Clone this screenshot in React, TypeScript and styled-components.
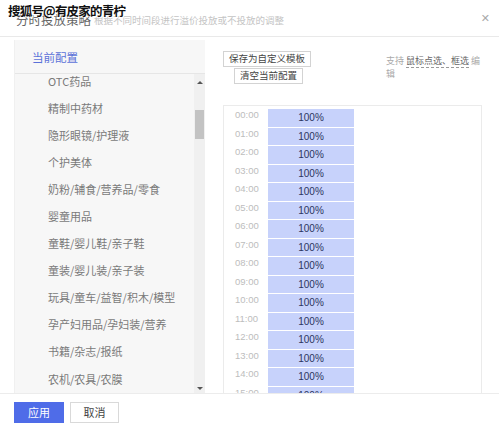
import React from 'react';
import styled, {createGlobalStyle} from 'styled-components';

const GlobalStyle = createGlobalStyle`
    html, body {
        margin: 0;
        padding: 0;
        background: #fff;
    }
    body {
        font-family: "Noto Sans CJK SC", "Noto Sans", sans-serif;
    }
`;

/* Modal frame */
const Modal = styled.div`
    position: relative;
    width: 499px;
    height: 430px;
    display: flex;
    flex-direction: column;
    background: #fff;
    overflow: hidden;
`;

const Header = styled.div`
    height: 36px;
    flex: none;
    display: flex;
    align-items: center;
    padding: 0 9px 0 16px;
    border-bottom: 1px solid #e9e9e9;
`;

const Title = styled.span`
    font-size: 12.5px;
    line-height: 16px;
    color: #666;
    margin-top: 3px;
`;

const SubTitle = styled.span`
    font-size: 9.5px;
    line-height: 12px;
    color: #c4c4c4;
    margin: 4px 0 0 3px;
    flex: 1;
`;

const CloseButton = styled.span`
    font-family: "DejaVu Sans", sans-serif;
    font-size: 11px;
    color: #aaa;
    cursor: pointer;
`;

/* Watermark laid over the title */
const Watermark = styled.div`
    position: absolute;
    top: 2px;
    left: 8px;
    font-size: 12.5px;
    font-weight: bold;
    line-height: 18px;
    letter-spacing: -0.8px;
    color: #111;
    text-shadow: 0 0 1px #fff, 0 0 2px #fff, 1px 1px 0 #fff;
    pointer-events: none;
`;

const Body = styled.div`
    flex: 1;
    min-height: 0;
    display: flex;
    padding: 3px 14px 0 14px;
    overflow: hidden;
`;

/* Left category panel */
const SidePanel = styled.div`
    width: 191px;
    flex: none;
    display: flex;
    flex-direction: column;
    background: #f7f7f7;
    border-left: 1px solid #f0f0f0;
    box-sizing: border-box;
`;

const SideHeader = styled.div`
    height: 33px;
    flex: none;
    display: flex;
    align-items: center;
    padding-left: 17px;
    font-size: 11.5px;
    color: #5b72d9;
    border-bottom: 1px solid #e6e6e6;
`;

const SideScroll = styled.div`
    flex: 1;
    min-height: 0;
    display: flex;
`;

const CategoryList = styled.div`
    flex: 1;
    overflow: hidden;
`;

const CategoryInner = styled.div`
    margin-top: -7px;
`;

const CategoryItem = styled.div`
    height: 27.1px;
    display: flex;
    align-items: center;
    padding-left: 33px;
    font-size: 11px;
    color: #7a7a7a;
    white-space: nowrap;
`;

const ScrollTrack = styled.div`
    width: 11px;
    flex: none;
    display: flex;
    flex-direction: column;
    align-items: center;
    background: #f0f0f0;
`;

const ScrollArrow = styled.div<{ $down?: boolean }>`
    width: 0;
    height: 0;
    border-left: 3px solid transparent;
    border-right: 3px solid transparent;
    ${({$down}) => $down
        ? 'border-top: 3px solid #555; margin-top: auto; margin-bottom: 3px;'
        : 'border-bottom: 3px solid #555; margin-top: 7px;'}
`;

const ScrollThumb = styled.div`
    width: 9px;
    height: 29px;
    margin-top: 26px;
    background: #c3c3c3;
`;

/* Right time settings */
const Main = styled.div`
    flex: 1;
    display: flex;
    flex-direction: column;
    padding-left: 18px;
`;

const Toolbar = styled.div`
    display: flex;
    justify-content: space-between;
    align-items: flex-start;
    padding-top: 11px;
    height: 54px;
    flex: none;
`;

const ButtonStack = styled.div`
    display: flex;
    flex-direction: column;
    align-items: flex-start;
`;

const GhostButton = styled.button<{ $indent?: number }>`
    height: 16px;
    padding: 0 5px;
    margin-left: ${({$indent}) => $indent || 0}px;
    margin-bottom: 1px;
    display: inline-flex;
    align-items: center;
    justify-content: center;
    font-family: inherit;
    font-size: 9.5px;
    line-height: 1;
    color: #444;
    background: #fff;
    border: 1px solid #d3d3d3;
    cursor: pointer;
`;

const Hint = styled.div`
    width: 99px;
    margin-top: 3px;
    font-size: 9px;
    line-height: 13px;
    color: #aaa;
    word-break: break-all;
`;

const HintLink = styled.span`
    color: #666;
    border-bottom: 1px dashed #999;
`;

const ChartBox = styled.div`
    flex: 1;
    margin-right: 3px;
    padding: 3px 12px 0 11px;
    border: 1px solid #ebebeb;
    border-bottom: none;
    overflow: hidden;
`;

const HourRow = styled.div`
    display: flex;
    align-items: flex-start;
    height: 17.5px;
    margin-bottom: 1px;
`;

const HourLabel = styled.span`
    width: 33px;
    flex: none;
    font-family: "Liberation Sans", Arial, sans-serif;
    font-size: 9.5px;
    line-height: 11px;
    color: #bdbdbd;
`;

const HourBar = styled.div`
    width: 86px;
    height: 100%;
    display: flex;
    align-items: center;
    justify-content: center;
    padding-top: 1px;
    box-sizing: border-box;
    background: #c7d2fb;
    font-family: "Liberation Sans", Arial, sans-serif;
    font-size: 10px;
    line-height: 1;
    color: #2c3560;
`;

/* Footer */
const Footer = styled.div`
    height: 36px;
    flex: none;
    display: flex;
    align-items: center;
    gap: 6px;
    padding: 0 14px;
    border-top: 1px solid #ececec;
`;

const FooterButton = styled.button<{ $primary?: boolean }>`
    width: ${({$primary}) => ($primary ? 50 : 49)}px;
    height: 21px;
    padding: 0;
    display: inline-flex;
    align-items: center;
    justify-content: center;
    font-family: inherit;
    font-size: 11px;
    line-height: 1;
    color: ${({$primary}) => ($primary ? '#fff' : '#444')};
    background: ${({$primary}) => ($primary ? '#4f6ce8' : '#fff')};
    border: 1px solid ${({$primary}) => ($primary ? '#4f6ce8' : '#d9d9d9')};
    cursor: pointer;
`;

const categories = [
    'OTC药品',
    '精制中药材',
    '隐形眼镜/护理液',
    '个护美体',
    '奶粉/辅食/营养品/零食',
    '婴童用品',
    '童鞋/婴儿鞋/亲子鞋',
    '童装/婴儿装/亲子装',
    '玩具/童车/益智/积木/模型',
    '孕产妇用品/孕妇装/营养',
    '书籍/杂志/报纸',
    '农机/农具/农膜',
    '宠物/宠物食品及用品',
];

const hours = Array.from({length: 24}, (_, i) => `${String(i).padStart(2, '0')}:00`);

const App: React.FC = () => {
    return (
        <>
            <GlobalStyle/>
            <Modal>
                <Header>
                    <Title>分时投放策略</Title>
                    <SubTitle>根据不同时间段进行溢价投放或不投放的调整</SubTitle>
                    <CloseButton>✕</CloseButton>
                </Header>
                <Watermark>搜狐号@有皮家的青柠</Watermark>

                <Body>
                    <SidePanel>
                        <SideHeader>当前配置</SideHeader>
                        <SideScroll>
                            <CategoryList>
                                <CategoryInner>
                                    {categories.map((c) => (
                                        <CategoryItem key={c}>{c}</CategoryItem>
                                    ))}
                                </CategoryInner>
                            </CategoryList>
                            <ScrollTrack>
                                <ScrollArrow/>
                                <ScrollThumb/>
                                <ScrollArrow $down/>
                            </ScrollTrack>
                        </SideScroll>
                    </SidePanel>

                    <Main>
                        <Toolbar>
                            <ButtonStack>
                                <GhostButton>保存为自定义模板</GhostButton>
                                <GhostButton $indent={11}>清空当前配置</GhostButton>
                            </ButtonStack>
                            <Hint>
                                支持 <HintLink>鼠标点选、框选</HintLink> 编辑
                            </Hint>
                        </Toolbar>
                        <ChartBox>
                            {hours.map((h) => (
                                <HourRow key={h}>
                                    <HourLabel>{h}</HourLabel>
                                    <HourBar>100%</HourBar>
                                </HourRow>
                            ))}
                        </ChartBox>
                    </Main>
                </Body>

                <Footer>
                    <FooterButton $primary>应用</FooterButton>
                    <FooterButton>取消</FooterButton>
                </Footer>
            </Modal>
        </>
    );
};

export default App;
